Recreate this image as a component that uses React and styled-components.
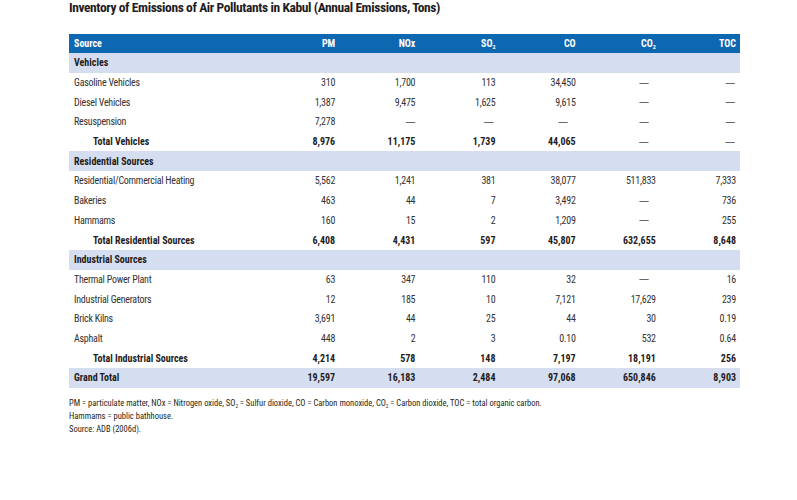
import React from 'react'
import styled, { createGlobalStyle } from 'styled-components'

const GlobalStyle = createGlobalStyle`
  body {
    margin: 0;
    background: #ffffff;
    font-family: "Roboto Condensed", "Noto Sans", sans-serif;
    font-stretch: condensed;
    color: #2b2b2b;
  }
`

const Page = styled.div`
  width: 797px;
  height: 500px;
  padding: 0 0 0 69px;
  box-sizing: border-box;
`

const Title = styled.h1`
  margin: 0;
  padding-top: 0;
  height: 34px;
  font-size: 13.5px;
  line-height: 15px;
  letter-spacing: -0.4px;
  font-weight: 700;
  color: #1f1c1d;
`

const Table = styled.table`
  width: 671px;
  border-collapse: collapse;
  font-size: 10px;
  table-layout: fixed;
`

const HeadCell = styled.th`
  background: #0d67b1;
  color: #ffffff;
  font-weight: 700;
  height: 19px;
  padding: 0 4px 0 5px;
  text-align: ${(p) => (p.$left ? 'left' : 'right')};
  width: ${(p) => (p.$left ? '181px' : 'auto')};
`

const Row = styled.tr`
  background: ${(p) => (p.$shade ? '#d5def0' : 'transparent')};
  font-weight: ${(p) => (p.$bold ? 700 : 400)};
  letter-spacing: ${(p) => (p.$bold ? '0' : '-0.25px')};
  color: ${(p) => (p.$bold ? '#1f1c1d' : '#333132')};
`

const LabelCell = styled.td`
  height: 19.7px;
  padding: 0 4px 0 ${(p) => (p.$indent ? '24px' : '5px')};
  text-align: left;
  white-space: nowrap;
`

const NumCell = styled.td`
  padding: 0 ${(p) => 4 + (p.$inset || 0)}px 0 0;
  text-align: right;
  white-space: nowrap;
`

const Dash = styled.span`
  font-family: "Noto Sans", sans-serif;
  font-stretch: condensed;
  font-weight: 400;
  color: #6a6869;
  line-height: 1;
  vertical-align: 1px;
`

const Sub = styled.sub`
  font-size: 0.6em;
  vertical-align: -2px;
  line-height: 0;
`

const Notes = styled.div`
  margin-top: 9px;
  font-size: 8.5px;
  line-height: 13px;
  color: #231f20;
`

const D = '—'

const columns = ['PM', 'NOx', <>SO<Sub>2</Sub></>, 'CO', <>CO<Sub>2</Sub></>, 'TOC']
// extra right inset for dashes per column
const dashInset = [0, 0, 2, 8, 7, 1]

const sections = [
  {
    name: 'Vehicles',
    rows: [
      ['Gasoline Vehicles', '310', '1,700', '113', '34,450', D, D],
      ['Diesel Vehicles', '1,387', '9,475', '1,625', '9,615', D, D],
      ['Resuspension', '7,278', D, D, D, D, D],
    ],
    total: ['Total Vehicles', '8,976', '11,175', '1,739', '44,065', D, D],
  },
  {
    name: 'Residential Sources',
    rows: [
      ['Residential/Commercial Heating', '5,562', '1,241', '381', '38,077', '511,833', '7,333'],
      ['Bakeries', '463', '44', '7', '3,492', D, '736'],
      ['Hammams', '160', '15', '2', '1,209', D, '255'],
    ],
    total: ['Total Residential Sources', '6,408', '4,431', '597', '45,807', '632,655', '8,648'],
  },
  {
    name: 'Industrial Sources',
    rows: [
      ['Thermal Power Plant', '63', '347', '110', '32', D, '16'],
      ['Industrial Generators', '12', '185', '10', '7,121', '17,629', '239'],
      ['Brick Kilns', '3,691', '44', '25', '44', '30', '0.19'],
      ['Asphalt', '448', '2', '3', '0.10', '532', '0.64'],
    ],
    total: ['Total Industrial Sources', '4,214', '578', '148', '7,197', '18,191', '256'],
  },
]

const grand = ['Grand Total', '19,597', '16,183', '2,484', '97,068', '650,846', '8,903']

const DataRow = ({ cells, bold, shade, indent }) => (
  <Row $bold={bold} $shade={shade}>
    <LabelCell $indent={indent}>{cells[0]}</LabelCell>
    {cells.slice(1).map((v, i) => (
      <NumCell key={i} $inset={v === D ? dashInset[i] : 0}>
        {v === D ? <Dash>{D}</Dash> : v}
      </NumCell>
    ))}
  </Row>
)

export default function App() {
  return (
    <Page>
      <GlobalStyle />
      <Title>Inventory of Emissions of Air Pollutants in Kabul (Annual Emissions, Tons)</Title>
      <Table>
        <thead>
          <tr>
            <HeadCell $left>Source</HeadCell>
            {columns.map((c, i) => (
              <HeadCell key={i}>{c}</HeadCell>
            ))}
          </tr>
        </thead>
        <tbody>
          {sections.map((s) => (
            <React.Fragment key={s.name}>
              <Row $shade $bold>
                <LabelCell colSpan={7}>{s.name}</LabelCell>
              </Row>
              {s.rows.map((r) => (
                <DataRow key={r[0]} cells={r} />
              ))}
              <DataRow cells={s.total} bold indent />
            </React.Fragment>
          ))}
          <DataRow cells={grand} bold shade />
        </tbody>
      </Table>
      <Notes>
        PM = particulate matter, NOx = Nitrogen oxide, SO<Sub>2</Sub> = Sulfur dioxide, CO = Carbon monoxide, CO<Sub>2</Sub> = Carbon dioxide, TOC = total organic carbon.
        <br />
        Hammams = public bathhouse.
        <br />
        Source: ADB (2006d).
      </Notes>
    </Page>
  )
}
